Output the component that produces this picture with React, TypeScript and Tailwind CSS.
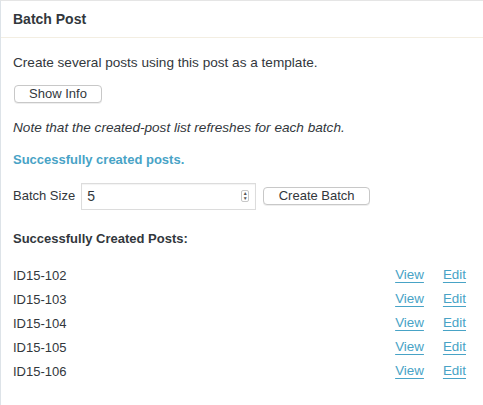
const posts = ["ID15-102", "ID15-103", "ID15-104", "ID15-105", "ID15-106"];

export default function App() {
  return (
    <div
      className="h-[405px] w-[483px] overflow-hidden bg-white text-[13px] text-[#32373c]"
      style={{ fontFamily: '"Liberation Sans", Arial, sans-serif' }}
    >
      <div className="h-full border-l border-t border-l-[#dde3e8] border-t-[#e5e5e5]">
        <div className="flex h-[37px] items-center border-b border-[#f3eee2] px-[12px] pt-[1px]">
          <h2 className="text-[14px] font-bold">Batch Post</h2>
        </div>

        <div className="px-[12px]">
          <p className="mt-[16px] text-[13.6px] leading-[18px]">
            Create several posts using this post as a template.
          </p>

          <button
            type="button"
            className="mt-[13px] ml-[1px] h-[18px] w-[88px] rounded-[4px] border border-[#c8c8c8] bg-white text-[13px] leading-[16px] shadow-[0_1px_0_#eee]"
          >
            Show Info
          </button>

          <p className="mt-[15px] text-[13.6px] italic leading-[18px]">
            Note that the created-post list refreshes for each batch.
          </p>

          <p className="mt-[14px] font-bold leading-[18px] text-[#48a3c6]">Successfully created posts.</p>

          <div className="mt-[14px] flex items-center">
            <label className="mr-[6px]">Batch Size</label>
            <div className="flex h-[27px] w-[175px] items-center border border-[#dcdcdc] bg-white pl-[5px] pr-[6px] shadow-[inset_0_1px_1px_rgba(0,0,0,0.05)]">
              <span className="flex-1 text-[14px]">5</span>
              <span className="flex h-[12px] w-[8px] flex-col items-center justify-center rounded-[2px] border border-[#c8c8c8] text-[5px] leading-[5px] text-[#555]">
                <span>▲</span>
                <span>▼</span>
              </span>
            </div>
            <button
              type="button"
              className="ml-[7px] h-[18px] w-[107px] rounded-[4px] border border-[#c8c8c8] bg-white text-[13px] leading-[16px] shadow-[0_1px_0_#eee]"
            >
              Create Batch
            </button>
          </div>

          <p className="mt-[20px] font-bold leading-[18px]">Successfully Created Posts:</p>

          <ul className="mt-[16px] flex flex-col">
            {posts.map((p) => (
              <li key={p} className="flex h-[24px] items-center">
                <span className="flex-1">{p}</span>
                <a className="text-[13.4px] text-[#48a3c6] underline underline-offset-[3px]" href="#">
                  View
                </a>
                <a className="ml-[19px] mr-[5px] text-[13.4px] text-[#48a3c6] underline underline-offset-[3px]" href="#">
                  Edit
                </a>
              </li>
            ))}
          </ul>
        </div>
      </div>
    </div>
  );
}
